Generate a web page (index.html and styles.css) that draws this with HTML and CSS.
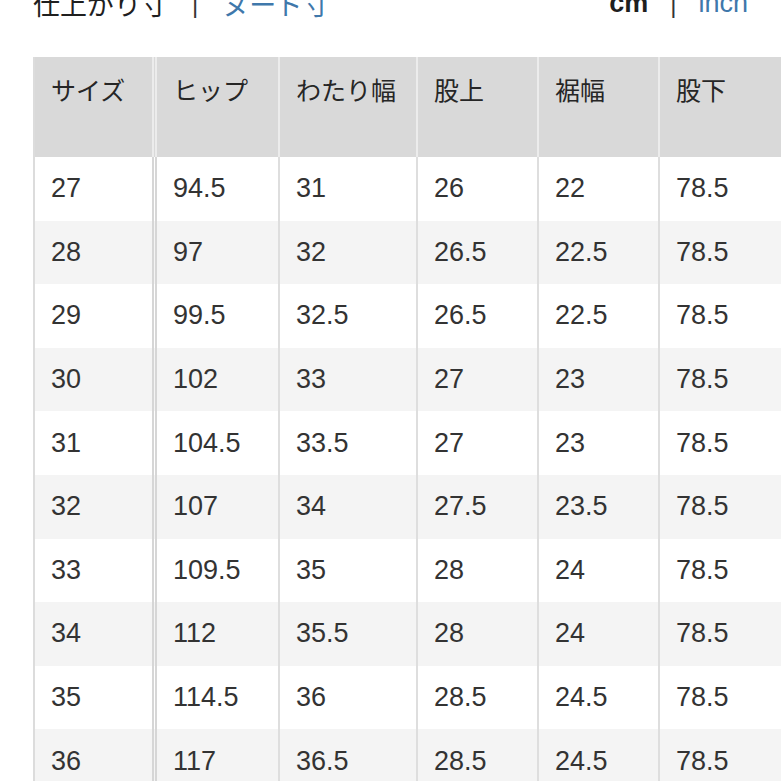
FILE: index.html
```html
<!DOCTYPE html>
<html lang="ja">
<head>
<meta charset="utf-8">
<link rel="stylesheet" href="styles.css">
</head>
<body>
<div class="topbar">
  <div class="tabs">
    <span class="tab active">仕上がり寸</span>
    <span class="sep">|</span>
    <span class="tab link">ヌード寸</span>
  </div>
  <div class="units">
    <span class="unit active">cm</span>
    <span class="sep">|</span>
    <span class="unit link">inch</span>
  </div>
</div>
<table class="sizes">
  <colgroup>
    <col class="c1"><col class="c2"><col class="c3"><col class="c4"><col class="c5"><col class="c6">
  </colgroup>
  <thead>
    <tr><th class="first">サイズ</th><th>ヒップ</th><th>わたり幅</th><th>股上</th><th>裾幅</th><th>股下</th></tr>
  </thead>
  <tbody>
    <tr><td class="first">27</td><td>94.5</td><td>31</td><td>26</td><td>22</td><td>78.5</td></tr>
    <tr><td class="first">28</td><td>97</td><td>32</td><td>26.5</td><td>22.5</td><td>78.5</td></tr>
    <tr><td class="first">29</td><td>99.5</td><td>32.5</td><td>26.5</td><td>22.5</td><td>78.5</td></tr>
    <tr><td class="first">30</td><td>102</td><td>33</td><td>27</td><td>23</td><td>78.5</td></tr>
    <tr><td class="first">31</td><td>104.5</td><td>33.5</td><td>27</td><td>23</td><td>78.5</td></tr>
    <tr><td class="first">32</td><td>107</td><td>34</td><td>27.5</td><td>23.5</td><td>78.5</td></tr>
    <tr><td class="first">33</td><td>109.5</td><td>35</td><td>28</td><td>24</td><td>78.5</td></tr>
    <tr><td class="first">34</td><td>112</td><td>35.5</td><td>28</td><td>24</td><td>78.5</td></tr>
    <tr><td class="first">35</td><td>114.5</td><td>36</td><td>28.5</td><td>24.5</td><td>78.5</td></tr>
    <tr><td class="first">36</td><td>117</td><td>36.5</td><td>28.5</td><td>24.5</td><td>78.5</td></tr>
  </tbody>
</table>
</body>
</html>
```
FILE: styles.css
```css
html, body {
  margin: 0;
  padding: 0;
  background: #ffffff;
  overflow: hidden;
}
body {
  font-family: "Liberation Sans", "Noto Sans CJK JP", sans-serif;
  color: #2b2b2b;
}
.topbar {
  display: flex;
  justify-content: space-between;
  align-items: flex-end;
  height: 24px;
  margin-top: -7px;
  padding: 0 33px 0 33px;
  line-height: 1;
}
.tabs, .units {
  display: flex;
  align-items: flex-end;
  gap: 24px;
}
.tabs {
  font-family: "Noto Sans CJK JP", sans-serif;
  font-size: 27px;
}
.units {
  font-size: 27px;
  gap: 22px;
}
.tab.active { color: #1f1f1f; }
.unit.active { font-weight: bold; color: #1f1f1f; }
.link { color: #3f78ab; }
.sep { color: #333; font-family: "Liberation Sans", sans-serif; font-size: 24px; }

.sizes {
  margin-top: 40px;
  margin-left: 33px;
  width: 747px;
  table-layout: fixed;
  border-collapse: separate;
  border-spacing: 0;
  border-left: 2px solid #dcdcdc;
  border-right: 2px solid #cfcfcf;
}
.c1 { width: 122px; }
.c2 { width: 123px; }
.c3 { width: 138px; }
.c4 { width: 121px; }
.c5 { width: 121px; }
.c6 { width: 122px; }

.sizes th {
  height: 100px;
  box-sizing: border-box;
  background: #d9d9d9;
  font-family: "Noto Sans CJK JP", sans-serif;
  font-weight: normal;
  font-size: 25px;
  color: #262626;
  text-align: left;
  vertical-align: top;
  padding: 14px 0 0 16px;
  border-right: 2px solid #ececec;
  white-space: nowrap;
}
.sizes th.first { border-right: 5px double #ececec; }
.sizes th:last-child { border-right: none; }

.sizes td {
  height: 63.6px;
  box-sizing: border-box;
  padding: 0 0 0 16px;
  font-size: 27px;
  color: #333333;
  vertical-align: middle;
  border-right: 2px solid #dedede;
}
.sizes td.first { border-right: 5px double #d6d6d6; }
.sizes td:last-child { border-right: none; }
.sizes tbody tr:nth-child(odd) td { background: #ffffff; }
.sizes tbody tr:nth-child(even) td { background: #f4f4f4; }
```
